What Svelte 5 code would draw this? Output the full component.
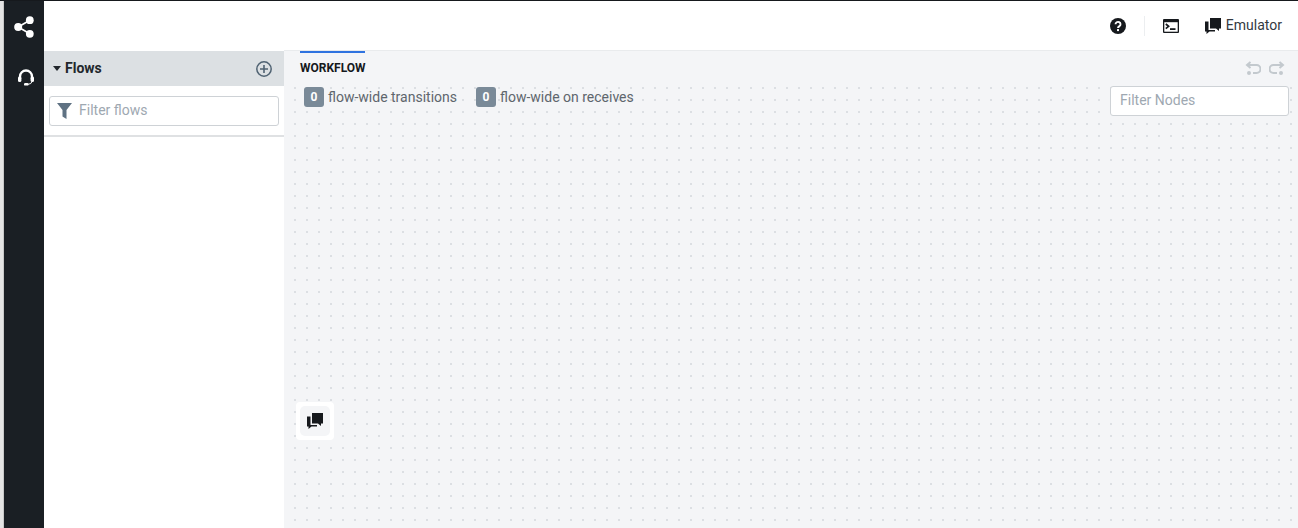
<script>
  let counters = [
    { count: 0, label: "flow-wide transitions" },
    { count: 0, label: "flow-wide on receives" },
  ];
</script>

<div class="page">
  <div class="strip"></div>
  <nav class="rail">
    <button class="rail-btn share" aria-label="Flows">
      <svg width="20" height="22" viewBox="0 0 20 22" fill="#fff">
        <circle cx="15.800" cy="4.200" r="3.900" />
        <circle cx="15.800" cy="17.800" r="3.900" />
        <circle cx="4.200" cy="11" r="4" />
        <path d="M4.200 11 15.800 4.200M4.200 11 15.800 17.800" stroke="#fff" stroke-width="1.600" />
      </svg>
    </button>
    <button class="rail-btn headset" aria-label="Support">
      <svg width="16" height="17" viewBox="0 0 16 17" fill="none">
        <path d="M2 10V7.500a6 6 0 0 1 12 0V10" stroke="#fff" stroke-width="2.400" />
        <rect x="0" y="7.500" width="3.400" height="5.500" rx="1.500" fill="#fff" />
        <rect x="12.600" y="7.500" width="3.400" height="5.500" rx="1.500" fill="#fff" />
        <path d="M14 12.500q-.5 2.700-4 2.800" stroke="#fff" stroke-width="1" />
        <rect x="6" y="14" width="4.500" height="2.600" rx="1.200" fill="#fff" />
      </svg>
    </button>
  </nav>

  <div class="main">
    <header class="topbar">
      <button class="top-btn help" aria-label="Help">
        <svg width="16" height="16" viewBox="0 0 16 16">
          <circle cx="8" cy="8" r="8" fill="#16191d" />
          <path d="M5.500 6.200a2.500 2.300 0 1 1 3.900 1.900c-.9.600-1.400 1-1.400 2" fill="none" stroke="#fff" stroke-width="1.900" />
          <rect x="7" y="11.100" width="2" height="2" fill="#fff" />
        </svg>
      </button>
      <span class="divider"></span>
      <button class="top-btn terminal" aria-label="Console">
        <svg width="16" height="14" viewBox="0 0 16 14">
          <rect width="16" height="14" rx="1" fill="#16191d" />
          <rect x="1.300" y="3.200" width="13.400" height="9.500" fill="#fff" />
          <path d="M2.800 5l2.800 2.300-2.800 2.300" fill="none" stroke="#16191d" stroke-width="1.700" />
          <rect x="7" y="9.200" width="5.500" height="1.800" fill="#16191d" />
        </svg>
      </button>
      <button class="top-btn emulator">
        <svg width="16" height="16" viewBox="0 0 16 16" fill="#16191d">
          <path d="M5 0h11v10.500h-2v2.500l-3-2.500H5z" />
          <path d="M0 3.500h3.500V12H10v1.500H4.500L1.500 16v-2.500H0z" />
        </svg>
        <span>Emulator</span>
      </button>
    </header>

    <div class="body">
      <aside class="flows">
        <div class="flows-head">
          <span class="caret"></span>
          <span class="flows-title">Flows</span>
          <svg class="add" width="16" height="16" viewBox="0 0 16 16" fill="none" stroke="#4f6272">
            <circle cx="8" cy="8" r="7.200" stroke-width="1.500" />
            <path d="M8 4v8M4 8h8" stroke-width="1.600" />
          </svg>
        </div>
        <div class="flows-filter">
          <label class="filter-box">
            <svg width="15" height="16" viewBox="0 0 15 16" fill="#5f7283">
              <path d="M0 0h15L9.500 7v9l-4-2.500V7z" />
            </svg>
            <input placeholder="Filter flows" />
          </label>
        </div>
      </aside>

      <section class="canvas">
        <div class="canvas-top">
          <div class="tab">WORKFLOW</div>
          <div class="history">
            <svg width="16" height="15" viewBox="0 0 16 15" fill="none" stroke="#c3c9ce" stroke-width="2">
              <path d="M5.500 1 2 4l3.500 3M2 4h9.500a3.500 3.500 0 0 1 0 8H8" />
              <circle cx="4" cy="12" r="2" fill="#c3c9ce" stroke="none" />
            </svg>
            <svg width="16" height="15" viewBox="0 0 16 15" fill="none" stroke="#c3c9ce" stroke-width="2">
              <path d="M10.500 1 14 4l-3.500 3M14 4H4.500a3.500 3.500 0 0 0 0 8H8" />
              <circle cx="12" cy="12" r="2" fill="#c3c9ce" stroke="none" />
            </svg>
          </div>
        </div>
        <div class="canvas-row">
          <div class="counters">
            {#each counters as c}
              <div class="counter">
                <span class="badge">{c.count}</span>
                <span>{c.label}</span>
              </div>
            {/each}
          </div>
          <input class="filter-nodes" placeholder="Filter Nodes" />
        </div>
        <button class="chat" aria-label="Chat">
          <span class="chat-inner">
            <svg width="16" height="16" viewBox="0 0 16 16" fill="#16191d">
              <path d="M5 0h11v10.500h-2v2.500l-3-2.500H5z" />
              <path d="M0 3.500h3.500V12H10v1.500H4.500L1.500 16v-2.500H0z" />
            </svg>
          </span>
        </button>
      </section>
    </div>
  </div>
</div>

<style>
  :global(body) {
    margin: 0;
    font-family: Roboto, "Liberation Sans", sans-serif;
    overflow: hidden;
  }
  button {
    border: 0;
    background: none;
    padding: 0;
    font: inherit;
    display: flex;
    align-items: center;
  }
  .page {
    height: 528px;
    display: flex;
    border-top: 1px solid #16191d;
    box-sizing: border-box;
  }
  .strip {
    width: 3px;
    background: #e4e4e4;
    border-right: 1px solid #c8c8c8;
  }
  .rail {
    width: 40px;
    background: #1a1f24;
    display: flex;
    flex-direction: column;
    align-items: center;
  }
  .rail-btn.share {
    margin-top: 15px;
  }
  .rail-btn.headset {
    margin-top: 31px;
    margin-left: 4px;
  }
  .main {
    flex: 1;
    display: flex;
    flex-direction: column;
    min-width: 0;
  }
  .topbar {
    height: 49px;
    background: #fff;
    display: flex;
    align-items: center;
    justify-content: flex-end;
    padding-right: 16px;
    box-sizing: border-box;
  }
  .divider {
    width: 1px;
    height: 20px;
    background: #eceef0;
    margin: 0 18px;
  }
  .emulator {
    margin-left: 26px;
    gap: 5px;
    font-size: 14px;
    color: #33393f;
  }
  .emulator span {
    margin-top: -2px;
  }
  .body {
    flex: 1;
    display: flex;
    min-height: 0;
  }
  .flows {
    width: 240px;
    background: #fff;
  }
  .flows-head {
    height: 35px;
    margin-top: 1px;
    background: #dce0e3;
    display: flex;
    align-items: center;
    padding: 0 12px 0 9px;
  }
  .caret {
    border-left: 4px solid transparent;
    border-right: 4px solid transparent;
    border-top: 5px solid #22272c;
    margin-right: 4px;
  }
  .flows-title {
    flex: 1;
    font-size: 14px;
    font-weight: 700;
    color: #22272c;
    margin-top: -2px;
  }
  .flows-filter {
    height: 39px;
    border-bottom: 2px solid #dfe1e3;
    padding: 10px 5px 0;
  }
  .filter-box {
    height: 30px;
    box-sizing: border-box;
    border: 1px solid #ced2d6;
    border-radius: 3px;
    display: flex;
    align-items: center;
    padding-left: 7px;
    gap: 7px;
  }
  .filter-box input {
    border: 0;
    outline: 0;
    flex: 1;
    min-width: 0;
    font: inherit;
    font-size: 14px;
    background: none;
    padding: 0 0 2px;
  }
  input::placeholder {
    color: #9ea8b1;
    opacity: 1;
  }
  .canvas {
    flex: 1;
    position: relative;
    background-color: #f4f5f7;
    background-image: radial-gradient(circle at center, #dcdfe3 1px, transparent 1.2px);
    background-size: 12px 12px;
    background-position: 5px 7px;
    border-top: 1px solid #e9ebed;
    min-width: 0;
  }
  .canvas-top {
    height: 36px;
    background: #f4f5f7;
    display: flex;
    justify-content: space-between;
    padding: 0 13px 0 16px;
    box-sizing: border-box;
  }
  .tab {
    width: 65px;
    height: 24px;
    border-top: 2px solid #2f73e0;
    padding-top: 8px;
    font-size: 12px;
    font-weight: 700;
    color: #16191d;
    line-height: 14px;
  }
  .history {
    display: flex;
    gap: 8px;
    padding-top: 10px;
  }
  .canvas-row {
    display: flex;
    justify-content: space-between;
    align-items: flex-start;
    padding-right: 9px;
    margin-top: -1px;
  }
  .counters {
    display: flex;
    gap: 19px;
    padding-left: 20px;
    color: #5e666d;
    font-size: 14px;
  }
  .counter {
    display: flex;
    align-items: center;
    gap: 4px;
    height: 20px;
    margin-top: 1px;
  }
  .badge {
    width: 20px;
    height: 20px;
    border-radius: 3px;
    background: #7a8a98;
    color: #fff;
    font-size: 12px;
    font-weight: 700;
    display: flex;
    align-items: center;
    justify-content: center;
  }
  .filter-nodes {
    width: 179px;
    height: 30px;
    box-sizing: border-box;
    border: 1px solid #ced2d6;
    border-radius: 3px;
    background: #fff;
    padding: 0 9px 2px;
    font: inherit;
    font-size: 14px;
    outline: 0;
  }
  .chat {
    position: absolute;
    left: 12px;
    top: 351px;
    width: 38px;
    height: 38px;
    background: #fff;
    border-radius: 4px;
    padding: 4px;
    box-sizing: border-box;
  }
  .chat-inner {
    width: 30px;
    height: 30px;
    border-radius: 5px;
    background: #f4f5f7;
    display: flex;
    align-items: center;
    justify-content: center;
  }
</style>
